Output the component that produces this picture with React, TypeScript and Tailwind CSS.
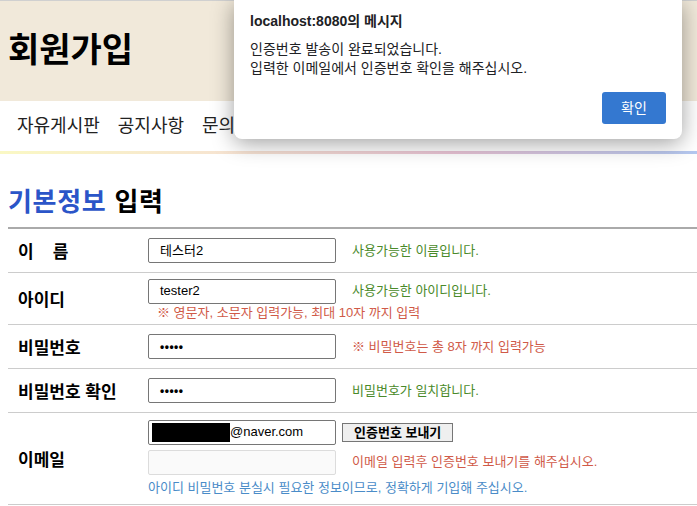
import React from "react";

const font = { fontFamily: '"Liberation Sans", "Noto Sans CJK KR", sans-serif' };

function Input({ value, type = "text", disabled = false, children }: { value?: string; type?: string; disabled?: boolean; children?: React.ReactNode }) {
  return (
    <div
      className={
        "w-[188px] h-[25px] rounded-[2px] border flex items-center pl-[11px] text-[13px] text-black " +
        (disabled ? "bg-[#fafafa] border-[#dcdcdc]" : "bg-white border-[#767676]")
      }
    >
      {children ?? (type === "password" ? <span className="text-[12px] tracking-[0.5px] font-bold">•••••</span> : value)}
    </div>
  );
}

function Row({ label, h, children }: { label: React.ReactNode; h: string; children: React.ReactNode }) {
  return (
    <div className={"flex border-b border-[#cccccc] " + h}>
      <div className="w-[140px] pl-[10px] pt-[5px] flex items-center text-[17px] font-bold text-black">{label}</div>
      <div className="flex-1 flex flex-col justify-center">{children}</div>
    </div>
  );
}

export default function App() {
  return (
    <div className="relative w-[697px] h-[506px] overflow-hidden bg-white" style={font}>
      {/* header */}
      <div className="h-[101px] bg-[#f1e9da] border-t border-[#d0d0d0] flex items-center pl-[8px]">
        <h1 className="text-[34px] font-bold text-black leading-none mt-[-2px]">회원가입</h1>
      </div>
      <nav className="h-[50px] flex items-center pl-[17px] gap-[18px] text-[18px] text-[#222]">
        <span>자유게시판</span>
        <span>공지사항</span>
        <span>문의사항</span>
      </nav>
      <div className="h-[3px] bg-[linear-gradient(90deg,#faf8c4_0%,#f6e2d2_35%,#e8c2d4_65%,#b4c8f0_100%)]" />

      {/* form */}
      <div className="pl-[8px]">
        <h2 className="mt-[32px] text-[26px] font-bold leading-[32px] tracking-[0.7px]">
          <span className="text-[#2b55c8]">기본정보</span> <span className="text-black">입력</span>
        </h2>
        <div className="mt-[9px] border-t-2 border-[#aaaaaa]">
          <Row label={<span><span className="mr-[19px]">이</span>름</span>} h="h-[44px]">
            <div className="flex items-center">
              <Input value="테스터2" />
              <span className="ml-[16px] text-[13px] text-[#4a8a2a]">사용가능한 이름입니다.</span>
            </div>
          </Row>
          <Row label="아이디" h="h-[52px]">
            <div className="flex items-center mt-[2px]">
              <Input value="tester2" />
              <span className="ml-[16px] text-[13px] text-[#4a8a2a]">사용가능한 아이디입니다.</span>
            </div>
            <div className="pl-[9px] mt-[1px] text-[13px] leading-[16px] text-[#d05a48]">※ 영문자, 소문자 입력가능, 최대 10자 까지 입력</div>
          </Row>
          <Row label="비밀번호" h="h-[44px]">
            <div className="flex items-center">
              <Input type="password" />
              <span className="ml-[16px] text-[13px] text-[#d05a48]">※ 비밀번호는 총 8자 까지 입력가능</span>
            </div>
          </Row>
          <Row label="비밀번호 확인" h="h-[44px]">
            <div className="flex items-center">
              <Input type="password" />
              <span className="ml-[16px] text-[13px] text-[#4a8a2a]">비밀번호가 일치합니다.</span>
            </div>
          </Row>
          <Row label="이메일" h="h-[92px]">
            <div className="flex items-center mt-[-2px]">
              <div className="w-[188px] h-[25px] rounded-[2px] border border-[#767676] bg-white flex items-center pl-[3px] text-[13px] text-black">
                <span className="w-[78px] h-[19px] bg-black" />
                <span>@naver.com</span>
              </div>
              <button className="ml-[6px] h-[19px] px-[11px] border border-[#767676] bg-[#efefef] text-[13px] font-bold text-black leading-none">
                인증번호 보내기
              </button>
            </div>
            <div className="flex items-center mt-[5px]">
              <Input disabled value="" />
              <span className="ml-[16px] text-[13px] text-[#d05a48]">이메일 입력후 인증번호 보내기를 해주십시오.</span>
            </div>
            <div className="mt-[5px] text-[13px] leading-[16px] text-[#4a8cc8]">아이디 비밀번호 분실시 필요한 정보이므로, 정확하게 기입해 주십시오.</div>
          </Row>
        </div>
      </div>

      {/* alert dialog */}
      <div className="absolute left-[234px] top-0 w-[448px] h-[139px] bg-white rounded-b-[8px] shadow-[0_4px_22px_rgba(0,0,0,0.38)] px-[16px] pt-[12px]">
        <div className="text-[14px] font-bold text-[#202124] leading-[18px]">localhost:8080의 메시지</div>
        <div className="mt-[10px] text-[14px] text-[#202124] leading-[19px]">
          <div>인증번호 발송이 완료되었습니다.</div>
          <div>입력한 이메일에서 인증번호 확인을 해주십시오.</div>
        </div>
        <div className="flex justify-end mt-[14px]">
          <button className="w-[64px] h-[32px] rounded-[3px] bg-[#3478d0] text-white text-[14px]">확인</button>
        </div>
      </div>
    </div>
  );
}
